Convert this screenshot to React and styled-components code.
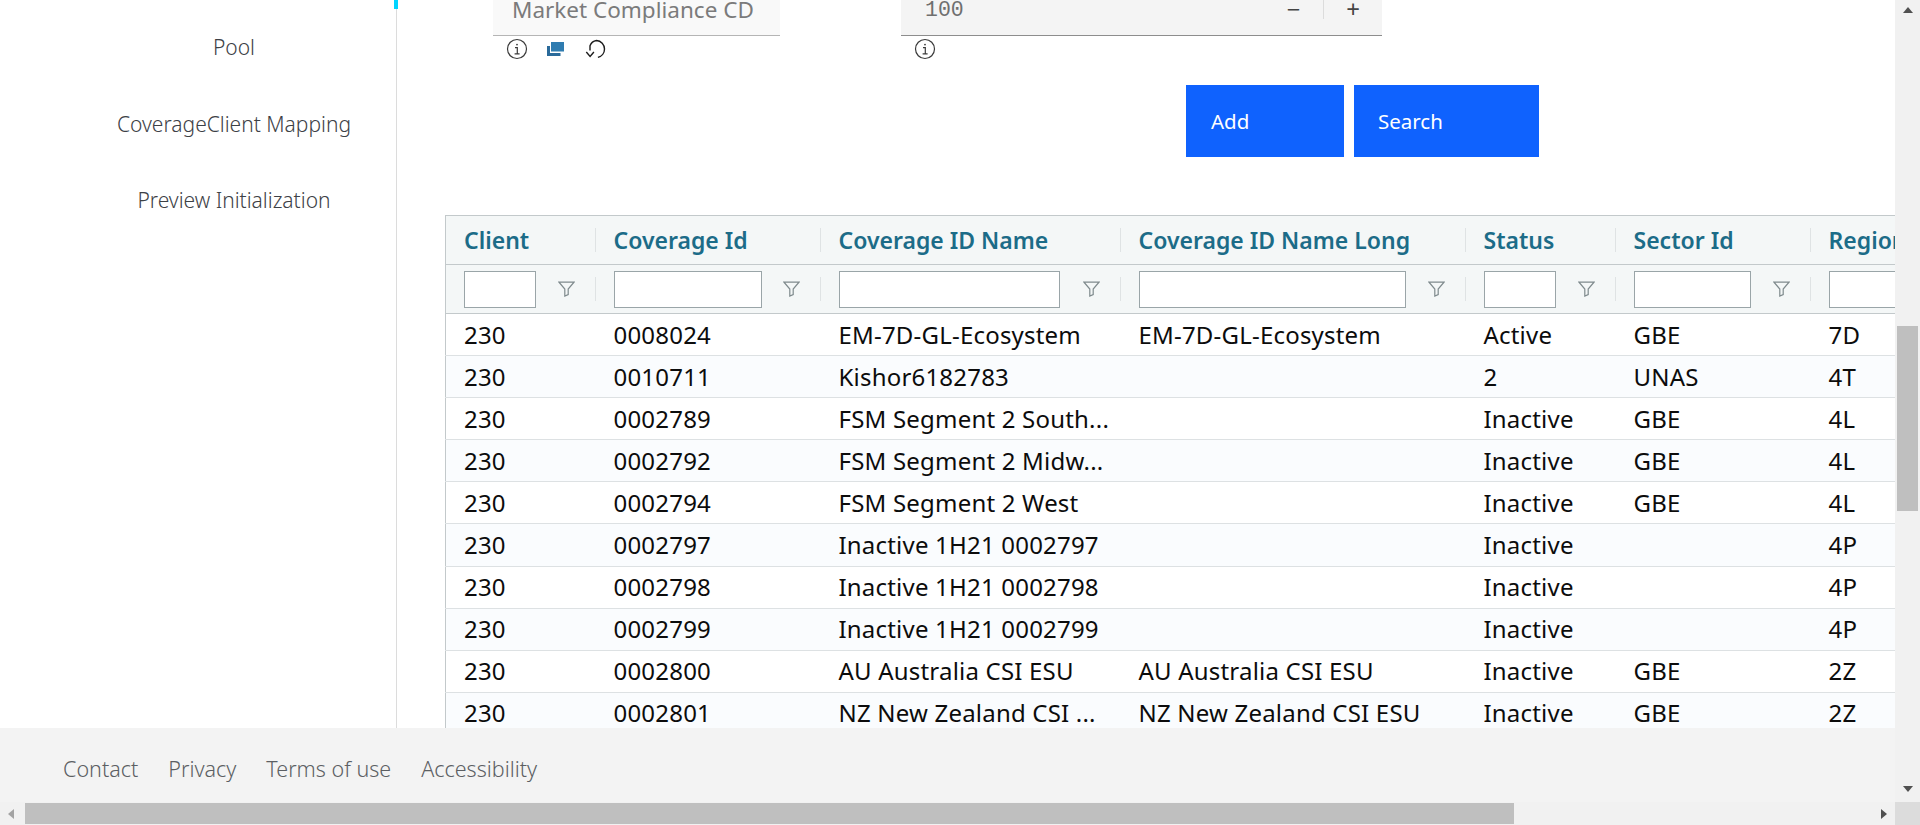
import React from "react";
import styled, { createGlobalStyle } from "styled-components";

const GlobalStyle = createGlobalStyle`
  html, body {
    margin: 0;
    padding: 0;
    height: 100%;
    overflow: hidden;
    background: #fff;
    font-family: "Noto Sans", "Open Sans", Arial, sans-serif;
  }
  * { box-sizing: border-box; }
`;

const Shell = styled.div`
  width: 1920px;
  height: 825px;
  display: flex;
  flex-direction: column;
  overflow: hidden;
`;

const Upper = styled.div`
  flex: 1;
  min-height: 0;
  display: flex;
`;

const Page = styled.div`
  flex: 1;
  min-width: 0;
  display: flex;
  flex-direction: column;
`;

const Content = styled.div`
  flex: 1;
  min-height: 0;
  display: flex;
  overflow: hidden;
`;

const Sidebar = styled.nav`
  position: relative;
  width: 397px;
  flex: none;
  border-right: 1px solid #dcdcdc;
  padding: 34px 0 0 72px;
  display: flex;
  flex-direction: column;
  align-items: center;
  gap: 49.5px;
`;

const ActiveMark = styled.span`
  position: absolute;
  top: 0;
  right: -2px;
  width: 4px;
  height: 9px;
  background: #00d4ff;
`;

const NavItem = styled.a`
  font-size: 21px;
  line-height: 27px;
  font-weight: 300;
  color: #3d4146;
`;

const Main = styled.main`
  flex: 1;
  min-width: 0;
  overflow: hidden;
  padding: 0 0 0 48px;
`;

const FormRow = styled.div`
  display: flex;
  align-items: flex-start;
  padding-left: 48px;
`;

const FieldGroup = styled.div`
  width: ${(p) => p.$width}px;
  margin-right: ${(p) => p.$gap || 0}px;
`;

const Field = styled.div`
  height: 36px;
  display: flex;
  align-items: center;
  justify-content: space-between;
  padding: 0 0 16px 19px;
  background: ${(p) => p.$bg};
  border-bottom: 1px solid ${(p) => p.$line};
  overflow: hidden;
`;

const Placeholder = styled.span`
  font-size: 22.5px;
  line-height: 24px;
  color: #7b7b7b;
`;

const NumberValue = styled.span`
  padding-left: 5px;
  font-family: "Liberation Mono", monospace;
  font-size: 21.5px;
  line-height: 24px;
  color: #6f6f6f;
`;

const Stepper = styled.div`
  display: flex;
  align-items: center;
  height: 24px;
  margin-top: -2px;
  font-size: 24px;
  color: #444;
`;

const StepButton = styled.span`
  width: 59px;
  text-align: center;
  line-height: 20px;
  border-left: ${(p) => (p.$divided ? "1px solid #dcdcdc" : "none")};
`;

const HelperIcons = styled.div`
  display: flex;
  align-items: center;
  gap: 19px;
  padding: 2px 0 0 ${(p) => p.$inset}px;
`;

const Actions = styled.div`
  display: flex;
  gap: 10px;
  margin: 25px 0 58px 741px;
`;

const Button = styled.button`
  width: ${(p) => p.$width}px;
  height: 72px;
  border: none;
  padding: 0 0 0 ${(p) => p.$pad}px;
  background: #0f62fe;
  color: #fff;
  text-align: left;
  font-family: inherit;
  font-size: 20.5px;
`;

const Table = styled.table`
  width: 1570px;
  table-layout: fixed;
  border-collapse: collapse;
  border-top: 1px solid #c3c9cb;
  border-left: 1px solid #c3c9cb;
`;

const HeadRow = styled.tr`
  height: 49px;
  background: #f4f7f7;
  border-bottom: 1px solid #c3c9cb;
`;

const FilterRow = styled.tr`
  height: 49px;
  background: #f4f7f7;
  border-bottom: 1px solid #c3c9cb;
`;

const HeadCell = styled.th`
  padding: 0;
  text-align: left;
  font-size: 23px;
  font-weight: 600;
  color: #1c6c88;
`;

const HeadInner = styled.div`
  height: 24px;
  line-height: 24px;
  padding-left: 18px;
  border-right: 1px solid #dfe3e4;
  white-space: nowrap;
`;

const FilterCell = styled.td`
  padding: 0;
`;

const FilterInner = styled.div`
  height: 24px;
  padding: 0 20px 0 18px;
  border-right: 1px solid #dfe3e4;
  display: flex;
  align-items: center;
  justify-content: space-between;
`;

const FilterInput = styled.input`
  flex: none;
  width: ${(p) => p.$width}px;
  height: 37px;
  padding: 0;
  background: #fff;
  border: 1px solid #9aa5a8;
  border-radius: 0;
`;

const Row = styled.tr`
  height: 42.1px;
  background: ${(p) => (p.$striped ? "#fafcfe" : "#fff")};
  border-bottom: 1px solid #dde1e3;
`;

const Cell = styled.td`
  padding: 0 0 0 18px;
  font-size: 24px;
  line-height: 26px;
  letter-spacing: 0.2px;
  color: #0c0c0c;
  white-space: nowrap;
  overflow: hidden;
`;

const Footer = styled.footer`
  height: 74px;
  flex: none;
  background: #f3f3f3;
  display: flex;
  align-items: center;
  gap: 30px;
  padding: 6px 0 0 63px;
`;

const FooterLink = styled.a`
  font-size: 21.5px;
  font-weight: 300;
  color: #5c5f63;
`;

const ScrollTrack = styled.div`
  flex: none;
  background: #f1f1f1;
  display: flex;
  align-items: center;
  justify-content: space-between;
`;

const VerticalTrack = styled(ScrollTrack)`
  width: 25px;
  flex-direction: column;
  padding: 7px 0 10px;
`;

const VerticalThumb = styled.div`
  width: 21px;
  height: 185px;
  margin-top: 313px;
  margin-bottom: auto;
  background: #bfbfbf;
`;

const HorizontalBar = styled.div`
  flex: none;
  height: 23px;
  display: flex;
`;

const HorizontalTrack = styled(ScrollTrack)`
  flex: 1;
  padding: 0 8px;
`;

const HorizontalThumb = styled.div`
  width: 1489px;
  height: 21px;
  margin-left: 11px;
  margin-right: auto;
  background: #bfbfbf;
`;

const Corner = styled.div`
  width: 25px;
  background: #dcdcdc;
`;

const Arrow = styled.span`
  width: 0;
  height: 0;
  border-style: solid;
  border-color: transparent;
  ${(p) => p.$dir === "up" && "border-width: 0 5.5px 6px; border-bottom-color: #505050;"}
  ${(p) => p.$dir === "down" && "border-width: 6px 5.5px 0; border-top-color: #505050;"}
  ${(p) => p.$dir === "left" && "border-width: 5.5px 6px 5.5px 0; border-right-color: #a3a3a3;"}
  ${(p) => p.$dir === "right" && "border-width: 5.5px 0 5.5px 6px; border-left-color: #505050;"}
`;

const ResetSvg = styled.svg`
  margin-left: 2px;
`;

const InfoIcon = () => (
  <svg width="22" height="22" viewBox="0 0 22 22" fill="none" stroke="#3a3a3a">
    <circle cx="11" cy="11" r="9.5" strokeWidth="1.2" />
    <path d="M9 9.6h2.3v6M8.6 15.8h5" strokeWidth="1.2" />
    <circle cx="11" cy="6.6" r="0.9" fill="#3a3a3a" stroke="none" />
  </svg>
);

const StackIcon = () => (
  <svg width="17" height="14" viewBox="0 0 17 14" fill="#2f7cb0">
    <rect x="4" y="0" width="13" height="9.5" />
    <path d="M0 4h3v7h10.5v3H0z" fill="#2a6a9a" />
  </svg>
);

const ResetIcon = () => (
  <ResetSvg width="22" height="22" viewBox="0 0 22 22" fill="none" stroke="#1c1c1c" strokeWidth="1.4">
    <path d="M5 12.6V7.8A8.2 8.2 0 0 1 11.5 2.5a8.5 8.5 0 0 1 8 8.6 8.5 8.5 0 0 1-6.6 8.3" />
    <path d="M1.3 14l3.8 4.4L8.9 14" />
  </ResetSvg>
);

const FilterIcon = () => (
  <svg width="17" height="16" viewBox="0 0 17 16" fill="none" stroke="#7f8a8d" strokeWidth="1.2">
    <path d="M1 1.2h15L10.2 8v5.6L6.8 15V8z" />
  </svg>
);

const columns = [
  { title: "Client", width: 150, input: 72 },
  { title: "Coverage Id", width: 225, input: 148 },
  { title: "Coverage ID Name", width: 300, input: 221 },
  { title: "Coverage ID Name Long", width: 345, input: 267 },
  { title: "Status", width: 150, input: 72 },
  { title: "Sector Id", width: 195, input: 117 },
  { title: "Region", width: 205, input: 117 },
];

const rows = [
  ["230", "0008024", "EM-7D-GL-Ecosystem", "EM-7D-GL-Ecosystem", "Active", "GBE", "7D"],
  ["230", "0010711", "Kishor6182783", "", "2", "UNAS", "4T"],
  ["230", "0002789", "FSM Segment 2 South...", "", "Inactive", "GBE", "4L"],
  ["230", "0002792", "FSM Segment 2 Midw...", "", "Inactive", "GBE", "4L"],
  ["230", "0002794", "FSM Segment 2 West", "", "Inactive", "GBE", "4L"],
  ["230", "0002797", "Inactive 1H21 0002797", "", "Inactive", "", "4P"],
  ["230", "0002798", "Inactive 1H21 0002798", "", "Inactive", "", "4P"],
  ["230", "0002799", "Inactive 1H21 0002799", "", "Inactive", "", "4P"],
  ["230", "0002800", "AU Australia CSI ESU", "AU Australia CSI ESU", "Inactive", "GBE", "2Z"],
  ["230", "0002801", "NZ New Zealand CSI ...", "NZ New Zealand CSI ESU", "Inactive", "GBE", "2Z"],
];

const App = () => (
  <Shell>
    <GlobalStyle />
    <Upper>
      <Page>
        <Content>
          <Sidebar>
            <ActiveMark />
            <NavItem>Pool</NavItem>
            <NavItem>CoverageClient Mapping</NavItem>
            <NavItem>Preview Initialization</NavItem>
          </Sidebar>
          <Main>
            <FormRow>
              <FieldGroup $width={287} $gap={121}>
                <Field $bg="#f9f9f9" $line="#b5b5b5">
                  <Placeholder>Market Compliance CD</Placeholder>
                </Field>
                <HelperIcons $inset={13}>
                  <InfoIcon />
                  <StackIcon />
                  <ResetIcon />
                </HelperIcons>
              </FieldGroup>
              <FieldGroup $width={481}>
                <Field $bg="#f4f4f4" $line="#8d8d8d">
                  <NumberValue>100</NumberValue>
                  <Stepper>
                    <StepButton>−</StepButton>
                    <StepButton $divided>+</StepButton>
                  </Stepper>
                </Field>
                <HelperIcons $inset={13}>
                  <InfoIcon />
                </HelperIcons>
              </FieldGroup>
            </FormRow>
            <Actions>
              <Button $width={158} $pad={25}>Add</Button>
              <Button $width={185} $pad={24}>Search</Button>
            </Actions>
            <Table>
              <colgroup>
                {columns.map((c) => (
                  <col key={c.title} style={{ width: c.width }} />
                ))}
              </colgroup>
              <thead>
                <HeadRow>
                  {columns.map((c) => (
                    <HeadCell key={c.title}>
                      <HeadInner>{c.title}</HeadInner>
                    </HeadCell>
                  ))}
                </HeadRow>
                <FilterRow>
                  {columns.map((c) => (
                    <FilterCell key={c.title}>
                      <FilterInner>
                        <FilterInput $width={c.input} />
                        <FilterIcon />
                      </FilterInner>
                    </FilterCell>
                  ))}
                </FilterRow>
              </thead>
              <tbody>
                {rows.map((r, i) => (
                  <Row key={r[1]} $striped={i % 2 === 1}>
                    {r.map((v, j) => (
                      <Cell key={j}>{v}</Cell>
                    ))}
                  </Row>
                ))}
              </tbody>
            </Table>
          </Main>
        </Content>
        <Footer>
          <FooterLink>Contact</FooterLink>
          <FooterLink>Privacy</FooterLink>
          <FooterLink>Terms of use</FooterLink>
          <FooterLink>Accessibility</FooterLink>
        </Footer>
      </Page>
      <VerticalTrack>
        <Arrow $dir="up" />
        <VerticalThumb />
        <Arrow $dir="down" />
      </VerticalTrack>
    </Upper>
    <HorizontalBar>
      <HorizontalTrack>
        <Arrow $dir="left" />
        <HorizontalThumb />
        <Arrow $dir="right" />
      </HorizontalTrack>
      <Corner />
    </HorizontalBar>
  </Shell>
);

export default App;
